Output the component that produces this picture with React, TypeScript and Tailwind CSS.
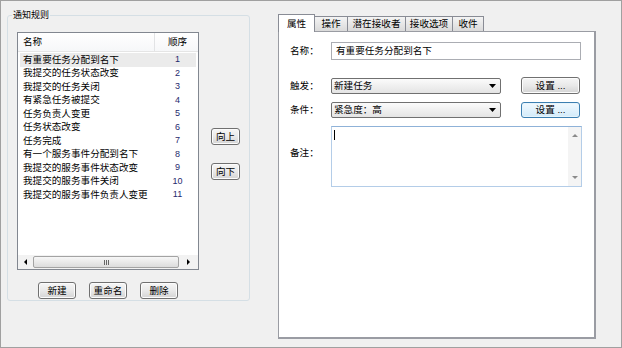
import type { ReactNode } from "react";

const rules = [
  "有重要任务分配到名下",
  "我提交的任务状态改变",
  "我提交的任务关闭",
  "有紧急任务被提交",
  "任务负责人变更",
  "任务状态改变",
  "任务完成",
  "有一个服务事件分配到名下",
  "我提交的服务事件状态改变",
  "我提交的服务事件关闭",
  "我提交的服务事件负责人变更",
];

const tabs = [
  { label: "操作", w: "w-[34px]" },
  { label: "潜在接收者", w: "w-[59px]" },
  { label: "接收选项", w: "w-[48px]" },
  { label: "收件", w: "w-[32px]" },
];

function WinButton({ children, className = "" }: { children: ReactNode; className?: string }) {
  return (
    <div
      className={`flex h-[17px] items-center justify-center rounded-[3px] border border-[#707070] bg-linear-to-b from-[#f6f6f6] via-[#e9e9e9] to-[#d4d4d4] shadow-[inset_0_0_0_1px_#fcfcfc] ${className}`}
    >
      {children}
    </div>
  );
}

function Dropdown({ value }: { value: string }) {
  return (
    <div className="flex h-[16px] w-[170px] items-center justify-between rounded-[2px] border border-[#707070] bg-linear-to-b from-[#fbfbfb] to-[#e4e4e4] pl-[2px] pr-[4px]">
      <span>{value}</span>
      <svg width="7" height="4" viewBox="0 0 7 4">
        <path d="M0 0h7L3.5 4z" fill="#000" />
      </svg>
    </div>
  );
}

function Arrow({ dir, color = "#000" }: { dir: "left" | "right" | "up" | "down"; color?: string }) {
  const d = {
    left: "M3 0v6L0 3z",
    right: "M0 0v6l3-3z",
    up: "M0 3h6L3 0z",
    down: "M0 0h6L3 3z",
  }[dir];
  const horiz = dir === "left" || dir === "right";
  return (
    <svg width={horiz ? 3 : 6} height={horiz ? 6 : 3} viewBox={horiz ? "0 0 3 6" : "0 0 6 3"}>
      <path d={d} fill={color} />
    </svg>
  );
}

function RuleList() {
  return (
    <div className="flex h-[238px] w-[182px] flex-col border border-[#828790] bg-white">
      <div className="flex h-[19px] shrink-0 border-b border-[#e5e5e5] bg-linear-to-b from-white to-[#f6f7f9]">
        <div className="flex w-[137px] items-center border-r border-[#e2e3e5] pl-[5px]">名称</div>
        <div className="flex flex-1 items-center justify-center pl-[2px]">顺序</div>
      </div>
      <div className="flex-1 pt-[1px]">
        {rules.map((rule, i) => (
          <div
            key={rule}
            className={`mx-[2px] flex h-[13.5px] items-center ${i === 0 ? "bg-[#ebebeb]" : ""}`}
          >
            <span className="w-[135px] whitespace-nowrap pl-[3px]">{rule}</span>
            <span className="flex-1 pl-[4px] text-center text-[9px] text-[#1f2a6e]">{i + 1}</span>
          </div>
        ))}
      </div>
      <div className="flex h-[14px] shrink-0 items-center bg-[#f2f2f2]">
        <div className="flex w-[15px] justify-center">
          <Arrow dir="left" />
        </div>
        <div className="flex h-[12px] w-[146px] items-center justify-center rounded-[2px] border border-[#a3a3a3] bg-linear-to-b from-[#f7f7f7] to-[#dcdcdc]">
          <div className="flex gap-[1px]">
            <span className="h-[5px] w-px bg-[#666]" />
            <span className="h-[5px] w-px bg-[#666]" />
            <span className="h-[5px] w-px bg-[#666]" />
          </div>
        </div>
        <div className="flex flex-1 justify-center">
          <Arrow dir="right" />
        </div>
      </div>
    </div>
  );
}

export default function App() {
  return (
    <div className="flex h-[348px] w-[622px] items-start border border-[#a0a0a0] bg-[#f0f0f0] font-['Liberation_Sans','Noto_Sans_CJK_SC',sans-serif] text-[9.6px] leading-none text-black">
      {/* 通知规则 group */}
      <div className="relative ml-[6px] mt-[14px] h-[286px] w-[243px] rounded-[3px] border border-[#d5dfe5] pl-[9px] pt-[16px]">
        <span className="absolute left-[4px] top-[-7px] bg-[#f0f0f0] px-[1px] text-[9px] leading-[13px]">
          通知规则
        </span>
        <div className="flex">
          <div className="flex flex-col">
            <RuleList />
            <div className="mt-[12px] flex justify-center gap-[13px]">
              <WinButton className="w-[38px]">新建</WinButton>
              <WinButton className="w-[38px]">重命名</WinButton>
              <WinButton className="w-[38px]">删除</WinButton>
            </div>
          </div>
          <div className="ml-[12px] flex flex-col gap-[18px] pt-[96px]">
            <WinButton className="w-[29px]">向上</WinButton>
            <WinButton className="w-[29px]">向下</WinButton>
          </div>
        </div>
      </div>

      {/* tab control */}
      <div className="ml-[28px] mt-[13px] flex flex-col">
        <div className="flex h-[17px] items-end">
          <div className="relative z-10 -mb-px flex h-[18px] w-[37px] items-center justify-center border border-b-0 border-[#898c95] bg-white">
            属性
          </div>
          {tabs.map((t) => (
            <div
              key={t.label}
              className={`-ml-px flex h-[15px] ${t.w} items-center justify-center border border-b-0 border-[#898c95] bg-linear-to-b from-[#f4f4f4] to-[#dadada]`}
            >
              {t.label}
            </div>
          ))}
        </div>
        <div className="h-[308px] w-[318px] border border-b-2 border-r-2 border-[#9a9ca3] bg-white pl-[11px] pt-[10px]">
          <div className="flex items-center">
            <span className="w-[41px]">名称：</span>
            <div className="flex h-[18px] w-[250px] items-center border border-[#abadb3] pl-[4px]">
              有重要任务分配到名下
            </div>
          </div>
          <div className="mt-[17px] flex items-center">
            <span className="w-[41px]">触发：</span>
            <Dropdown value="新建任务" />
            <WinButton className="ml-[20px] h-[16px] w-[59px]">设置 ...</WinButton>
          </div>
          <div className="mt-[8px] flex items-center">
            <span className="w-[41px]">条件：</span>
            <Dropdown value="紧急度：高" />
            <div className="ml-[20px] flex h-[16px] w-[59px] items-center justify-center rounded-[3px] border border-[#3c7fb1] bg-linear-to-b from-[#f2f9fe] to-[#d2ebfa] shadow-[inset_0_0_0_1px_#e6f4fc]">
              设置 ...
            </div>
          </div>
          <div className="mt-[8px] flex items-center">
            <span className="w-[41px] pb-[7px]">备注：</span>
            <div className="flex h-[61px] w-[251px] border border-[#b4cde8] border-t-[#8fb2d8] bg-white">
              <div className="flex-1 pl-[2px] pt-[3px]">
                <div className="h-[10px] w-px bg-black" />
              </div>
              <div className="flex w-[13px] flex-col items-center justify-between bg-[#f4f4f4] py-[7px]">
                <Arrow dir="up" color="#8a8a8a" />
                <Arrow dir="down" color="#8a8a8a" />
              </div>
            </div>
          </div>
        </div>
      </div>
    </div>
  );
}
